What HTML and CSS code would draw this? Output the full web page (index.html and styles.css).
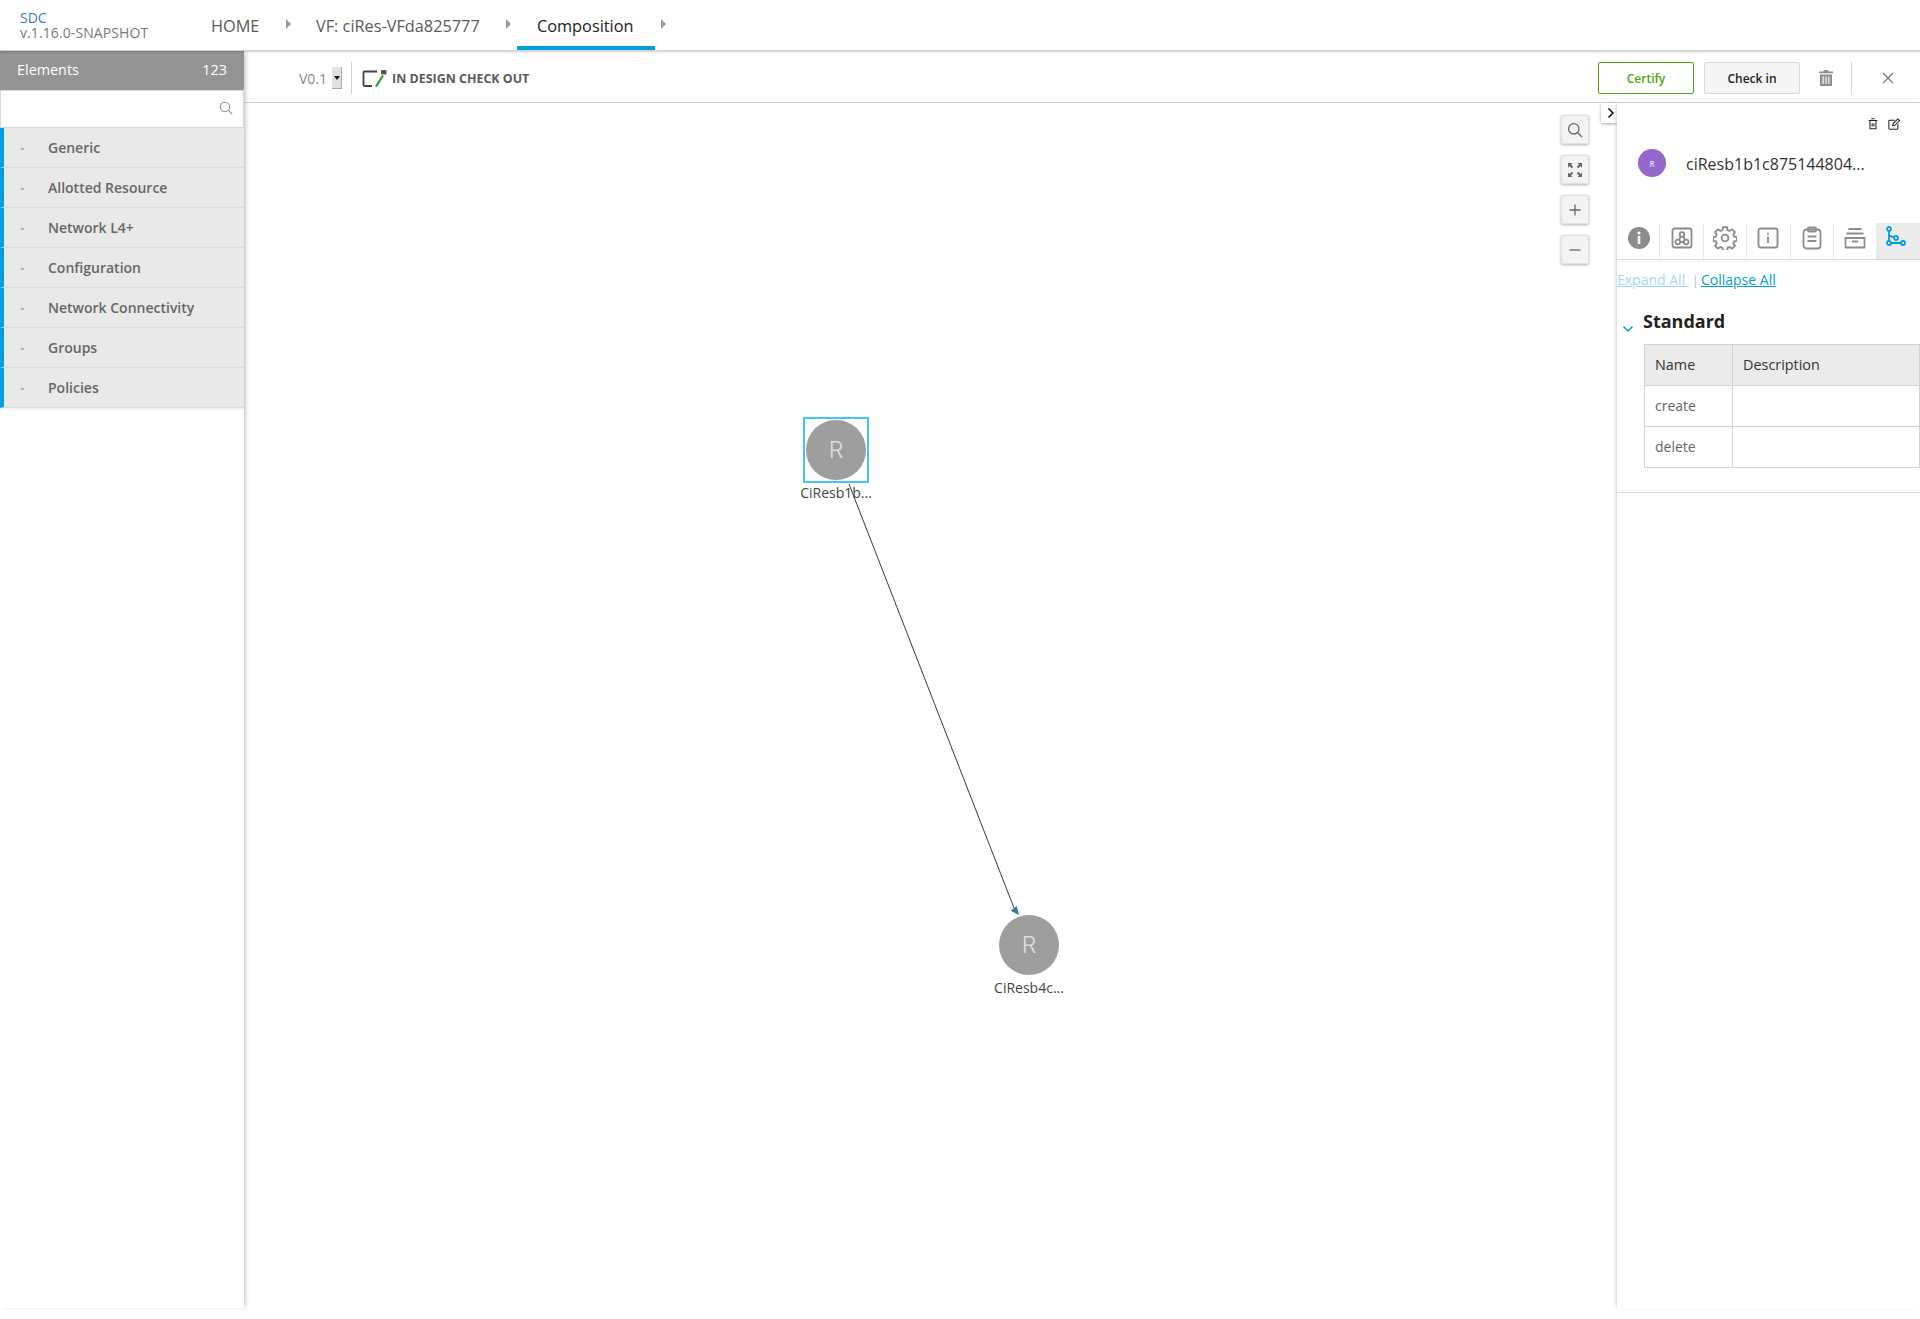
FILE: index.html
```html
<!DOCTYPE html>
<html lang="en">
<head>
<meta charset="utf-8">
<title>SDC Composition</title>
<link rel="stylesheet" href="styles.css">
</head>
<body>
<header class="topbar">
  <div class="brand"><div class="brand-name">SDC</div><div class="brand-ver">v.1.16.0-SNAPSHOT</div></div>
  <nav class="crumbs">
    <a class="crumb crumb-home">HOME</a><span class="caret caret-1"></span>
    <a class="crumb crumb-vf">VF: ciRes-VFda825777</a><span class="caret caret-2"></span>
    <a class="crumb crumb-active">Composition</a><span class="caret caret-3"></span>
  </nav>
</header>
<div class="main">
  <aside class="sidebar">
    <div class="el-head"><span>Elements</span><span>123</span></div>
    <div class="el-search">
      <svg class="ico-search" viewBox="0 0 16 16"><circle cx="6.800" cy="6.800" r="5.300"/><path d="M10.800 10.800 15 15"/></svg>
    </div>
    <ul class="el-list">
      <li><i>⌄</i>Generic</li>
      <li><i>⌄</i>Allotted Resource</li>
      <li><i>⌄</i>Network L4+</li>
      <li><i>⌄</i>Configuration</li>
      <li><i>⌄</i>Network Connectivity</li>
      <li><i>⌄</i>Groups</li>
      <li><i>⌄</i>Policies</li>
    </ul>
  </aside>
  <section class="work">
    <div class="toolbar">
      <div class="version"><span>V0.1</span><span class="vselect"><b></b></span></div>
      <div class="status">
        <svg class="ico-status" viewBox="0 0 26 18"><path class="st-a" d="M15 2.500H2.500a1 1 0 0 0-1 1V16a1 1 0 0 0 1 1H10"/><path class="st-c" d="M14 17.500l7-11"/><rect class="st-d" x="19" y="1" width="5.500" height="4.500" rx="1"/></svg>
        <span>IN DESIGN CHECK OUT</span>
      </div>
      <div class="actions">
        <button class="btn btn-certify">Certify</button>
        <button class="btn btn-checkin">Check in</button>
        <svg class="ico-trash" viewBox="0 0 14 16"><path d="M5 0h4l.6 1.500H14v1.800H0V1.500h4.400zM1 4.500h12V16H1zM3.500 6.500v7.500h1.200V6.500zM6.400 6.500v7.500h1.200V6.500zM9.300 6.500v7.500h1.200V6.500z" fill-rule="evenodd"/></svg>
        <span class="act-sep"></span>
        <svg class="ico-close" viewBox="0 0 12 12"><path d="M1 1l10 10M11 1 1 11"/></svg>
      </div>
    </div>
    <div class="body">
      <div class="canvas">
        <svg class="edges" viewBox="0 0 1373 1205"><path class="edge" d="M605 381 770 805"/><path class="arrow" d="M775 812 766.700 807.700 772.700 803z"/></svg>
        <div class="node node-a"><div class="select-box"></div><div class="circle">R</div><div class="node-label">CiResb1b...</div></div>
        <div class="node node-b"><div class="circle">R</div><div class="node-label">CiResb4c...</div></div>
        <div class="zoom-tools">
          <button class="ztool"><svg viewBox="0 0 16 16"><circle cx="6.800" cy="6.800" r="5.200"/><path d="M10.700 10.700 15 15"/></svg></button>
          <button class="ztool"><svg viewBox="0 0 16 16"><path class="fill" d="M1 1h4.500L4 2.500 6.200 4.700 4.700 6.200 2.500 4 1 5.500zM15 1v4.500L13.500 4 11.300 6.200 9.800 4.700 12 2.500 10.500 1zM1 15v-4.500L2.500 12 4.700 9.800 6.200 11.300 4 13.500 5.500 15zM15 15h-4.500L12 13.500 9.800 11.300 11.300 9.800 13.500 12 15 10.500z"/></svg></button>
          <button class="ztool"><svg viewBox="0 0 16 16"><path d="M8 2.500v11M2.500 8h11"/></svg></button>
          <button class="ztool"><svg viewBox="0 0 16 16"><path d="M2.500 8h11"/></svg></button>
        </div>
        <button class="collapse"><svg viewBox="0 0 8 12"><path d="M1.500 1.500 6 6 1.500 10.500"/></svg></button>
      </div>
      <aside class="panel">
        <div class="panel-top">
          <svg class="mini" viewBox="0 0 12 14"><path d="M4 1h4M1 3h10M2.500 3v9.500h7V3M5 6v4M7 6v4"/></svg>
          <svg class="mini" viewBox="0 0 14 14"><path d="M8 2.500H2a1 1 0 0 0-1 1V12a1 1 0 0 0 1 1h8.500a1 1 0 0 0 1-1V7M5.500 9l.5-2.500L11.500 1l2 2L8 8.500z"/></svg>
        </div>
        <div class="panel-title"><span class="avatar">R</span><span class="panel-name">ciResb1b1c875144804...</span></div>
        <div class="tabs">
          <div class="tab tab-info"><svg viewBox="0 0 24 24"><circle class="solid" cx="12" cy="12" r="11"/><rect class="knock" x="10.700" y="10" width="2.600" height="8"/><circle class="knock" cx="12" cy="7" r="1.600"/></svg></div>
          <div class="tab"><svg viewBox="0 0 24 24"><rect x="2.500" y="2.500" width="19" height="19" rx="2"/><circle cx="12" cy="8.500" r="2.300"/><circle cx="7.800" cy="16" r="2.300"/><circle cx="16.200" cy="16" r="2.300"/><path d="M10.800 10.500 9 14M13.200 10.500 15 14M10 16h4"/></svg></div>
          <div class="tab"><svg viewBox="0 0 24 24"><path d="M10 1.200h4l.6 2.900 2 .8 2.500-1.600 2.800 2.800-1.600 2.500.8 2 2.700.6v3.600l-2.700.6-.8 2 1.600 2.500-2.800 2.800-2.500-1.600-2 .8-.6 2.700h-4l-.6-2.700-2-.8-2.500 1.600-2.800-2.800 1.600-2.500-.8-2-2.700-.6v-3.600l2.700-.6.8-2-1.600-2.500 2.800-2.800 2.500 1.600 2-.8z"/><circle cx="12" cy="12" r="3.400"/></svg></div>
          <div class="tab"><svg viewBox="0 0 24 24"><rect x="2.500" y="2.500" width="19" height="19" rx="2"/><path d="M12 10.500v6.500M12 6.800v1.600"/></svg></div>
          <div class="tab"><svg viewBox="0 0 24 24"><rect x="3.500" y="3.500" width="17" height="19" rx="3"/><rect x="8" y="1.500" width="8" height="4" rx="1"/><path d="M7.500 10.500h9M7.500 15h9"/></svg></div>
          <div class="tab"><svg viewBox="0 0 24 24"><path d="M5.500 3h13M3.500 7.500h17"/><path d="M2.500 12h19v9.500h-19zM9 15.500h6"/></svg></div>
          <div class="tab tab-on"><svg viewBox="0 0 24 24"><circle cx="3" cy="3" r="2"/><circle cx="10" cy="12" r="2"/><circle cx="17" cy="17" r="2"/><circle cx="3" cy="17" r="2"/><path d="M3 5v10M5 17h10M3 9.500l5 1.800"/></svg></div>
        </div>
        <div class="links"><a class="link link-off">Expand All </a><span class="link-sep">|</span><a class="link">Collapse All</a></div>
        <div class="std">
          <svg class="chev" viewBox="0 0 12 8"><path d="M1.500 1.500 6 6l4.500-4.500"/></svg>
          <h3>Standard</h3>
        </div>
        <div class="tbl">
          <div class="cell cell-h">Name</div><div class="cell cell-h">Description</div>
          <div class="cell">create</div><div class="cell"></div>
          <div class="cell">delete</div><div class="cell"></div>
        </div>
        <div class="panel-rule"></div>
      </aside>
    </div>
  </section>
</div>
</body>
</html>
```
FILE: styles.css
```css
* { box-sizing: border-box; }
html, body { margin: 0; height: 100%; }
body { width: 1920px; height: 1319px; overflow: hidden; background: #fff; font-family: "Open Sans", sans-serif; color: #333; }

.topbar { height: 51px; display: flex; background: #fff; border-bottom: 1px solid #d2d2d2; box-shadow: 0 1px 2px rgba(0,0,0,.2); position: relative; z-index: 3; }
.brand { width: 211px; padding: 10px 0 0 20px; font-size: 14px; line-height: 15px; }
.brand-name { color: #3d7ab5; }
.brand-ver { color: #7a7a7a; letter-spacing: .1px; }
.crumbs { display: flex; align-items: flex-start; font-size: 16.300px; }
.crumb { display: flex; align-items: center; height: 50px; padding-top: 2px; color: #5a5a5a; white-space: nowrap; }
.crumb-home { width: 75px; }
.crumb-vf { width: 190px; }
.crumb-active { width: 138px; padding: 6px 0 0 20px; color: #222; border-bottom: 4px solid #009fdb; }
.caret { flex: none; width: 0; height: 0; margin-top: 19px; border-left: 5px solid #9a9a9a; border-top: 5px solid transparent; border-bottom: 5px solid transparent; }
.caret-1 { margin-right: 25px; }
.caret-2 { margin-right: 6px; }
.caret-3 { margin-left: 6px; }

.main { display: flex; height: 1257px; }
.sidebar { width: 244px; flex: none; background: #fff; box-shadow: 3px 0 4px -1px rgba(0,0,0,.2); position: relative; z-index: 2; height: 1257px; }
.el-head { height: 39px; padding: 0 17px 2px; background: #949494; color: #fff; font-size: 14.400px; display: flex; justify-content: space-between; align-items: center; }
.el-search { height: 38px; border: 1px solid #d8d8d8; display: flex; justify-content: flex-end; align-items: center; padding: 0 10px 3px 0; background: #fff; }
.ico-search { width: 14px; height: 14px; fill: none; stroke: #8a8a8a; stroke-width: 1.200; }
.el-list { list-style: none; margin: 0; padding: 0; box-shadow: 0 1px 2px rgba(0,0,0,.1); }
.el-list li { height: 40px; line-height: 39px; background: #e9e9e9; border-left: 4px solid #009fdb; border-bottom: 1px solid #dcdcdc; font-size: 14px; font-weight: 600; color: #666; display: flex; }
.el-list i { width: 44px; font-style: normal; font-size: 8px; color: #999; padding-left: 15px; line-height: 37px; }

.work { flex: 1; display: flex; flex-direction: column; min-width: 0; }
.toolbar { height: 52px; padding-top: 3px; border-bottom: 1px solid #d2d2d2; display: flex; align-items: center; background: #fff; }
.version { display: flex; align-items: center; margin-left: 55px; font-size: 14px; color: #888; height: 32px; padding-right: 9px; border-right: 1px solid #d2d2d2; }
.vselect { display: flex; align-items: center; justify-content: center; width: 10px; height: 22px; margin-left: 5px; background: #e2e2e2; border-right: 1px solid #aaa; border-bottom: 1px solid #aaa; }
.vselect b { border-top: 4px solid #111; border-left: 3px solid transparent; border-right: 3px solid transparent; }
.status { display: flex; align-items: center; margin-left: 10px; font-size: 12.450px; font-weight: 700; color: #5a5a5a; gap: 4px; }
.ico-status { width: 26px; height: 18px; fill: none; }
.st-a { stroke: #444; stroke-width: 1.800; }
.st-c { stroke: #1f9d3e; stroke-width: 2.200; }
.st-d { fill: #555; }
.actions { margin-left: auto; display: flex; align-items: center; padding-right: 26px; }
.btn { width: 96px; height: 32px; border-radius: 2px; font: 600 12px "Open Sans", sans-serif; padding: 0; }
.btn-certify { background: #fff; border: 1px solid #4ca90c; color: #4ca90c; }
.btn-checkin { margin-left: 10px; background: #f5f5f5; border: 1px solid #d8d8d8; color: #222; }
.ico-trash { width: 14px; height: 16px; margin-left: 19px; fill: #8f8f8f; }
.act-sep { width: 1px; height: 32px; margin-left: 18px; background: #d2d2d2; }
.ico-close { width: 12px; height: 12px; margin-left: 30px; fill: none; stroke: #777; stroke-width: 1.300; }

.body { flex: 1; display: flex; min-height: 0; }
.canvas { flex: 1; position: relative; min-width: 0; }
.edges { position: absolute; left: 0; top: 0; width: 1373px; height: 1205px; }
.edge { stroke: #3a3a3a; stroke-width: 1; fill: none; }
.arrow { fill: #2f7da3; }
.node { position: absolute; width: 80px; display: flex; flex-direction: column; align-items: center; }
.node-a { left: 552px; top: 317px; }
.node-b { left: 745px; top: 812px; }
.circle { width: 60px; height: 60px; border-radius: 50%; background: #9e9e9e; color: #dedede; font: 300 23px Inter, sans-serif; display: flex; align-items: center; justify-content: center; }
.select-box { position: absolute; left: 7px; top: -3px; width: 66px; height: 66px; border: 2px solid #45c3f2; }
.node-label { font-size: 14px; line-height: 20px; margin-top: 3px; color: #444; white-space: nowrap; position: relative; }
.zoom-tools { position: absolute; right: 28px; top: 12px; display: flex; flex-direction: column; gap: 11px; }
.ztool { width: 28px; height: 29px; padding: 0; display: flex; align-items: center; justify-content: center; background: #f3f3f3; border: 1px solid #e0e0e0; border-radius: 2px; box-shadow: 0 1px 3px rgba(0,0,0,.3); }
.ztool svg { width: 16px; height: 16px; fill: none; stroke: #666; stroke-width: 1.300; }
.ztool svg .fill { fill: #666; stroke: none; }
.collapse { position: absolute; right: 0; top: 0; width: 16px; height: 20px; padding: 0 0 0 4px; display: flex; align-items: center; justify-content: center; background: #fff; border: 0; box-shadow: 0 1px 3px rgba(0,0,0,.35); }
.collapse svg { width: 8px; height: 12px; fill: none; stroke: #111; stroke-width: 1.600; }

.panel { width: 303px; flex: none; position: relative; background: #fff; box-shadow: -2px 0 3px -1px rgba(0,0,0,.2); height: 1205px; }
.panel-top { display: flex; justify-content: flex-end; gap: 9px; padding: 15px 20px 0 0; height: 46px; }
.mini { width: 12px; height: 12px; fill: none; stroke: #222; stroke-width: 1.200; }
.panel-title { display: flex; align-items: center; height: 28px; padding-left: 21px; }
.avatar { width: 28px; height: 28px; border-radius: 50%; background: #9467cc; color: #e8dcf5; font-size: 8px; font-weight: 600; display: flex; align-items: center; justify-content: center; }
.panel-name { font-size: 16px; color: #333; margin-left: 20px; white-space: nowrap; position: relative; top: 1px; }
.tabs { display: flex; margin-top: 46px; height: 37px; border-bottom: 1px solid #d8d8d8; }
.tab { width: 43.400px; height: 36px; display: flex; justify-content: center; padding-top: 3px; border-right: 1px solid #eaeaea; }
.tab-info { padding-left: 1px; }
.tab:last-child { border-right: 0; background: #ebebeb; flex: 1; padding-right: 2px; }
.tab svg { width: 24px; height: 24px; fill: none; stroke: #8c8c8c; stroke-width: 1.800; }
.tab .solid { fill: #8c8c8c; stroke: none; }
.tab .knock { fill: #fff; stroke: none; }
.tab-on svg { stroke: #009fdb; }
.links { padding-top: 10px; height: 38px; font-size: 14px; line-height: 20px; white-space: pre; }
.link { color: #009fdb; text-decoration: underline; }
.link-off { color: #9fdcf3; }
.link-sep { color: #bbb; margin: 0 2px 0 3px; font-size: 13px; }
.std { position: relative; height: 46px; padding: 10px 0 0 26px; }
.std h3 { margin: 0; font-size: 18px; line-height: 26px; font-weight: 700; color: #222; }
.chev { position: absolute; left: 5px; top: 27px; width: 12px; height: 8px; fill: none; stroke: #009fdb; stroke-width: 1.500; }
.tbl { display: grid; grid-template-columns: 88px 1fr; margin-left: 27px; border-top: 1px solid #d2d2d2; border-left: 1px solid #d2d2d2; }
.cell { height: 41px; padding-left: 10px; border-right: 1px solid #d2d2d2; border-bottom: 1px solid #d2d2d2; font-size: 14px; line-height: 40px; color: #666; }
.cell-h { background: #ebebeb; color: #333; font-size: 14.400px; }
.panel-rule { margin-top: 24px; height: 1px; background: #d8d8d8; }
```
